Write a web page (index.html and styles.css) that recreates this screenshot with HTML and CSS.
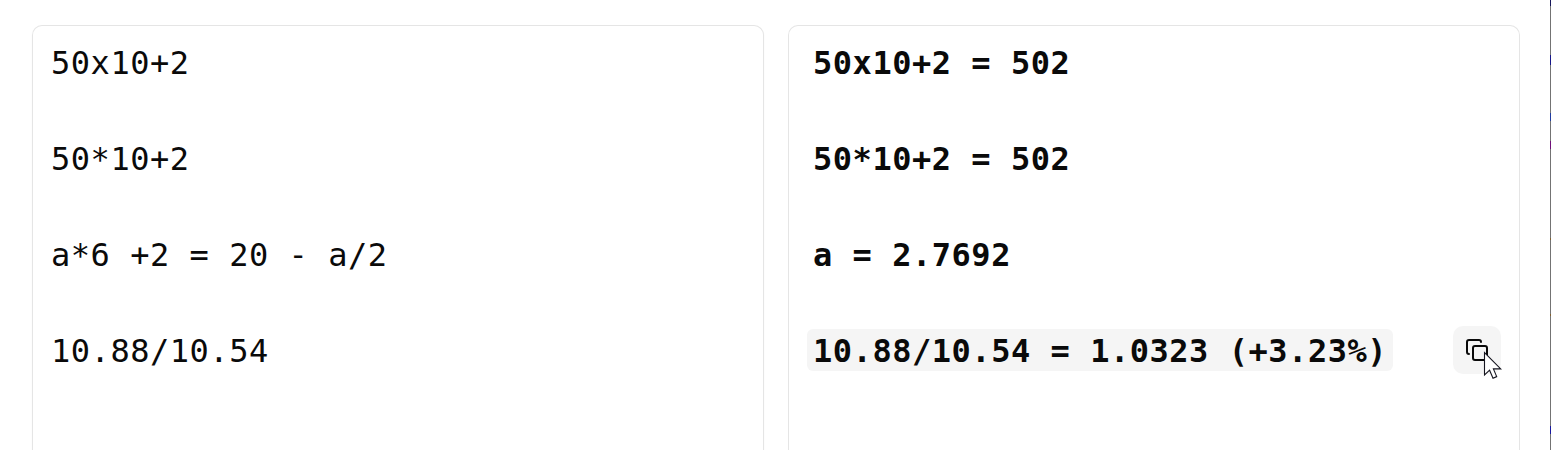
FILE: index.html
```html
<!DOCTYPE html>
<html lang="en">
<head>
<meta charset="utf-8">
<title>Calculator</title>
<link rel="stylesheet" href="styles.css">
</head>
<body>
<main class="workspace">
  <section class="panel input">
    <p class="line">50x10+2</p>
    <p class="line">50*10+2</p>
    <p class="line">a*6 +2 = 20 - a/2</p>
    <p class="line">10.88/10.54</p>
  </section>
  <section class="panel results">
    <p class="line">50x10+2 = 502</p>
    <p class="line">50*10+2 = 502</p>
    <p class="line">a = 2.7692</p>
    <div class="line active">
      <span class="value">10.88/10.54 = 1.0323 (+3.23%)</span>
      <button class="copy" aria-label="Copy">
        <svg width="24" height="24" viewBox="0 0 24 24" fill="none" stroke="#0a0a0a" stroke-width="2" stroke-linecap="round" stroke-linejoin="round"><rect x="8" y="8" width="14" height="14" rx="2"/><path d="M4 16c-1.1 0-2-.9-2-2V4c0-1.1.9-2 2-2h10c1.1 0 2 .9 2 2"/></svg>
        <svg class="pointer" width="20" height="29" viewBox="0 0 20 29" fill="#fff" stroke="#15151f" stroke-width="1.1"><path d="M1.5 1.5V24L6.6 19.2L10 27.2L13.7 25.6L10.4 17.9H17.7Z"/></svg>
      </button>
    </div>
  </section>
</main>
<div class="edge"></div>
</body>
</html>
```
FILE: styles.css
```css
* { box-sizing: border-box; }

body {
  margin: 0;
  height: 450px;
  overflow: hidden;
  display: flex;
  background: #fff;
  color: #0a0a0a;
}

.workspace {
  flex: 1;
  display: grid;
  grid-template-columns: 732px 732px;
  gap: 24px;
  padding: 25px 0 0 32px;
}

.panel {
  height: 425px;
  border: 1px solid #e5e5e5;
  border-bottom: 0;
  border-radius: 10px 10px 0 0;
  padding: 12px 18px 0;
  box-shadow: 0 1px 2px rgba(0, 0, 0, .04);
  font-family: "DejaVu Sans Mono", monospace;
  font-size: 32px;
  letter-spacing: .53px;
}

.line {
  margin: 0 0 48px;
  height: 48px;
  line-height: 50px;
  white-space: pre;
}

.line:last-child { margin-bottom: 0; }

.results {
  padding-left: 24px;
  font-weight: 700;
  box-shadow: none;
}

.active {
  display: flex;
  align-items: center;
  justify-content: space-between;
}

.value {
  height: 42px;
  line-height: 44px;
  width: 586px;
  margin-left: -6px;
  padding-left: 6px;
  border-radius: 6px;
  background: #f5f5f5;
}

.copy {
  position: relative;
  display: flex;
  align-items: center;
  justify-content: center;
  width: 48px;
  height: 48px;
  padding: 0;
  border: 0;
  border-radius: 10px;
  background: #f5f5f5;
}

.pointer {
  position: absolute;
  left: 30px;
  top: 25px;
}

.edge {
  width: 1px;
  background: linear-gradient(#16165a 0 6px, #737373 6px 55px, #16168a 55px 65px, #737373 65px 113px, #203ca0 113px 121px, #737373 121px 141px, #70107a 141px 149px, #737373 149px 238px, #806030 238px 240px, #737373 240px 314px, #806030 314px 316px, #737373 316px 426px, #1818a0 426px 434px, #737373 434px);
}
```
